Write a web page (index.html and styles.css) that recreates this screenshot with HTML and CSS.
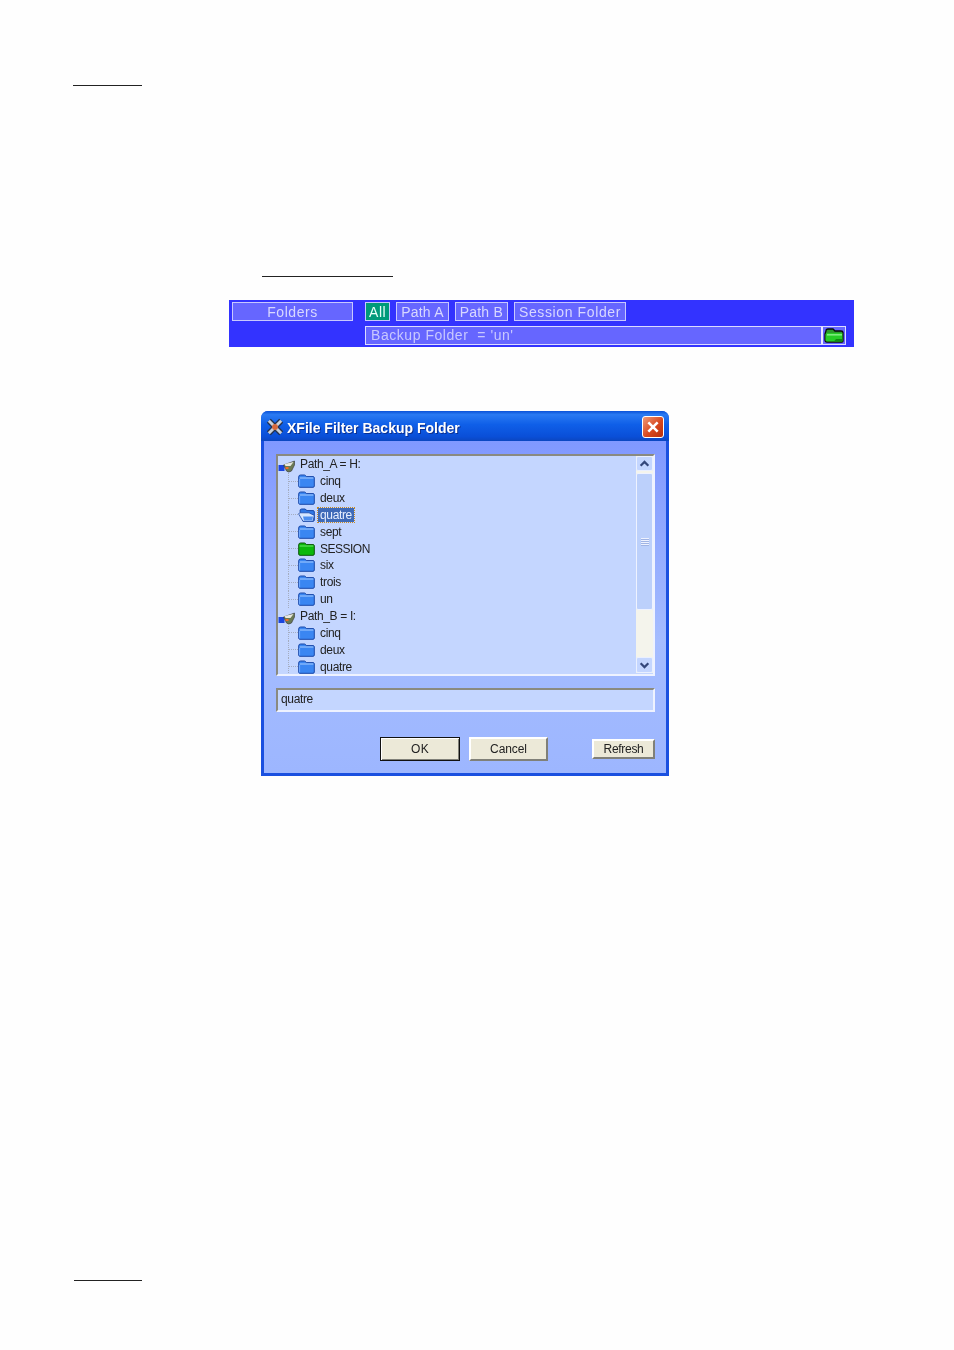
FILE: index.html
```html
<!DOCTYPE html>
<html lang="en">
<head>
<meta charset="utf-8">
<title>XFile Filter Backup Folder</title>
<link rel="stylesheet" href="styles.css">
</head>
<body>
<svg width="0" height="0" class="defs">
  <defs>
    <symbol id="folder" viewBox="0 0 17 14">
      <path d="M.7 3 Q.7 1 2.5 1 H6.5 Q7.5 1 8.3 2.6 H15 Q16.3 2.6 16.3 4 V12 Q16.3 13.3 15 13.3 H2 Q.7 13.3 .7 12 Z" fill="#3a86f2" stroke="#1a48a8" stroke-width="1"/>
      <path d="M1.6 4 H15.4" stroke="#a6ccff" stroke-width="1"/>
      <path d="M1.6 5 V12.4" stroke="#74aeff" stroke-width="1"/>
    </symbol>
    <symbol id="folder-open" viewBox="0 0 17 14">
      <path d="M2 3 Q2 1 3.5 1 H7 L9 2.6 H15 Q16.3 2.6 16.3 4 V12 Q16.3 13.3 15 13.3 H5 Z" fill="#2f78e6" stroke="#1a48a8" stroke-width="1"/>
      <path d="M.7 6 Q.7 4.8 2 4.8 H11 L16.3 7.4 L15 13.3 H5 Z" fill="#d6e6ff" stroke="#1a48a8" stroke-width=".8"/>
      <path d="M5 8.4 H15 L14.2 12.6 H6 Z" fill="#4c8ef0"/>
    </symbol>
    <symbol id="folder-green" viewBox="0 0 17 14">
      <path d="M.7 3 Q.7 1 2.5 1 H6.5 Q7.5 1 8.3 2.6 H15 Q16.3 2.6 16.3 4 V12 Q16.3 13.3 15 13.3 H2 Q.7 13.3 .7 12 Z" fill="#0cb80c" stroke="#0c540c" stroke-width="1"/>
      <path d="M1.6 4 H15.4" stroke="#6fe86f" stroke-width="1"/>
    </symbol>
    <symbol id="folder-bar" viewBox="0 0 20 15">
      <path d="M2 3 Q2 1 4 1 H9 L11 3 H17 Q19 3 19 4.5 V13 Q19 14 18 14 H3 Q1 14 1 12 V6 Z" fill="#2a9a2a" stroke="#0a0a0a" stroke-width="1.3"/>
      <path d="M1.6 6.4 Q2 5 3.4 5 H18.4 V13.4 H3 Q1.6 13.4 1.6 12 Z" fill="#26cc26"/>
      <path d="M3 6 H18 V7.6 H3 Z" fill="#7cec7c"/>
      <path d="M12 11 H18.4 V13.4 H10 Z" fill="#108a10"/>
    </symbol>
    <symbol id="drive" viewBox="0 0 18 14">
      <rect x="0" y="6" width="6" height="6" fill="#1b45e0"/>
      <path d="M5 6 L16 2 L16 6 L13 12 Q10 14 8 12 Z" fill="#6b7a55" stroke="#333" stroke-width=".6"/>
      <path d="M6 5 L15 3 L12 7 H7 Z" fill="#e8e8e0"/>
      <rect x="7" y="8" width="3" height="2" fill="#f07028"/>
    </symbol>
  </defs>
</svg>

<div class="rule rule-top"></div>
<div class="rule rule-section"></div>

<section class="bar">
  <div class="bar-title">Folders</div>
  <div class="bar-rows">
    <div class="bar-tabs">
      <span class="tab tab-active">All</span>
      <span class="tab tab-path">Path A</span>
      <span class="tab tab-path">Path B</span>
      <span class="tab tab-session">Session Folder</span>
    </div>
    <div class="bar-field">
      <span class="bar-value">Backup Folder&nbsp; = 'un'</span>
      <span class="bar-btn"><svg class="bar-icon"><use href="#folder-bar"/></svg></span>
    </div>
  </div>
</section>

<section class="dialog">
  <header class="titlebar">
    <svg class="app-icon" viewBox="0 0 16 16">
      <path d="M2.5 2.5 L13.5 13.5 M13.5 2.5 L2.5 13.5" stroke="#26324e" stroke-width="5"/>
      <path d="M2.5 2.5 L13.5 13.5 M13.5 2.5 L2.5 13.5" stroke="#c8d0dc" stroke-width="2.6"/>
      <circle cx="8" cy="8" r="2.6" fill="#d8683a"/>
    </svg>
    <span class="title">XFile Filter Backup Folder</span>
    <span class="close"><svg viewBox="0 0 12 12" class="close-x"><path d="M2 2 L10 10 M10 2 L2 10" stroke="#fff" stroke-width="2.2"/></svg></span>
  </header>
  <div class="client">
    <div class="treebox">
      <ul class="tree">
        <li class="node root"><svg class="drive"><use href="#drive"/></svg><span>Path_A = H:</span></li>
        <li class="node"><svg class="folder"><use href="#folder"/></svg><span>cinq</span></li>
        <li class="node"><svg class="folder"><use href="#folder"/></svg><span>deux</span></li>
        <li class="node"><svg class="folder"><use href="#folder-open"/></svg><span class="selected">quatre</span></li>
        <li class="node"><svg class="folder"><use href="#folder"/></svg><span>sept</span></li>
        <li class="node"><svg class="folder"><use href="#folder-green"/></svg><span class="caps">SESSION</span></li>
        <li class="node"><svg class="folder"><use href="#folder"/></svg><span>six</span></li>
        <li class="node"><svg class="folder"><use href="#folder"/></svg><span>trois</span></li>
        <li class="node"><svg class="folder"><use href="#folder"/></svg><span>un</span></li>
        <li class="node root"><svg class="drive"><use href="#drive"/></svg><span>Path_B = I:</span></li>
        <li class="node"><svg class="folder"><use href="#folder"/></svg><span>cinq</span></li>
        <li class="node"><svg class="folder"><use href="#folder"/></svg><span>deux</span></li>
        <li class="node"><svg class="folder"><use href="#folder"/></svg><span>quatre</span></li>
      </ul>
      <div class="scrollbar">
        <span class="sb-btn"><svg viewBox="0 0 10 8" class="chev"><path d="M1.5 6 L5 2.5 L8.5 6" fill="none" stroke="#34477a" stroke-width="2"/></svg></span>
        <span class="sb-thumb"><i class="grip"></i></span>
        <span class="sb-track"></span>
        <span class="sb-btn sb-down"><svg viewBox="0 0 10 8" class="chev"><path d="M1.5 2 L5 5.5 L8.5 2" fill="none" stroke="#34477a" stroke-width="2"/></svg></span>
      </div>
    </div>
    <div class="input">quatre</div>
    <div class="actions">
      <button class="btn btn-default">OK</button>
      <button class="btn btn-cancel">Cancel</button>
      <button class="btn btn-small">Refresh</button>
    </div>
  </div>
</section>

<div class="rule rule-bottom"></div>
</body>
</html>
```
FILE: styles.css
```css
* { box-sizing: border-box; }
html, body { margin: 0; padding: 0; }
body {
  width: 954px;
  height: 1350px;
  overflow: hidden;
  background: #fefefe;
  font-family: "Liberation Sans", Arial, sans-serif;
  color: #222;
}
.defs { position: absolute; }

.rule { height: 1px; background: #222; }
.rule-top { width: 69px; margin: 85px 0 0 73px; }
.rule-section { width: 131px; margin: 190px 0 0 262px; }
.rule-bottom { width: 68px; margin: 504px 0 0 74px; }

.bar {
  width: 625px;
  height: 47px;
  margin: 23px 0 0 229px;
  padding: 2px 8px 0 3px;
  background: #3333ff;
  display: flex;
  gap: 12px;
  color: #d8d8ff;
  font-size: 14px;
  letter-spacing: .55px;
  filter: blur(.25px);
}
.bar-title {
  width: 121px;
  height: 19px;
  line-height: 18px;
  text-align: center;
  background: #6666ff;
  border: 1px solid #c8c8ff;
}
.bar-rows { flex: 1; display: flex; flex-direction: column; gap: 5px; }
.bar-tabs { display: flex; gap: 6px; }
.tab {
  height: 19px;
  line-height: 18px;
  padding: 0 4px;
  background: #6666ff;
  border: 1px solid #c8c8ff;
}
.tab-active { background: #009a7a; color: #e8fff8; padding: 0 3px; }
.tab-path { letter-spacing: .2px; }
.tab-session { letter-spacing: .62px; }
.bar-field {
  height: 19px;
  display: flex;
  background: #6666ff;
  border: 1px solid #dcdcff;
}
.bar-value { flex: 1; line-height: 16px; padding-left: 5px; color: #c8c8ff; }
.bar-btn {
  width: 24px;
  border-left: 2px solid #e8e8ff;
  background: #6666ff;
  display: flex;
  align-items: center;
  justify-content: center;
}
.bar-icon { width: 20px; height: 15px; }

.dialog {
  width: 408px;
  height: 365px;
  margin: 64px 0 0 261px;
  background: #1a50e0;
  border-radius: 7px 7px 0 0;
  padding: 0 3px 3px;
  display: flex;
  flex-direction: column;
  filter: blur(.25px);
}
.titlebar {
  height: 30px;
  margin: 0 -3px;
  padding: 2px 5px 0 5px;
  display: flex;
  align-items: center;
  gap: 3px;
  border-radius: 7px 7px 0 0;
  background: linear-gradient(#0a52d8 0, #2a7af2 12%, #0f5fe8 45%, #0a4fd8 85%, #0b46c0 100%);
}
.app-icon { width: 18px; height: 18px; }
.title {
  flex: 1;
  padding-top: 2px;
  color: #fff;
  font-size: 14px;
  font-weight: bold;
  text-shadow: 1px 1px 0 #0a2f90;
}
.close {
  width: 22px;
  height: 22px;
  border: 1px solid #fff;
  border-radius: 3px;
  background: linear-gradient(135deg, #ef9a78, #d8481f 55%, #b8300c);
  display: flex;
  align-items: center;
  justify-content: center;
}
.close-x { width: 14px; height: 14px; }

.client {
  flex: 1;
  padding: 13px 11px 0 12px;
  background: linear-gradient(#8098ff, #a4bcff 60%, #9db6ff);
  font-size: 12px;
  letter-spacing: -.35px;
}
.treebox {
  height: 222px;
  display: flex;
  background: #c4d6ff;
  border: 2px solid;
  border-color: #8a8a80 #eef2ff #eef2ff #8a8a80;
  overflow: hidden;
}
.tree {
  flex: 1;
  list-style: none;
  margin: 0;
  padding: 0;
}
.node {
  height: 16.85px;
  display: flex;
  align-items: center;
  padding-left: 10px;
  white-space: nowrap;
}
.node::before {
  content: "";
  width: 9px;
  align-self: stretch;
  border-left: 1px dotted #a4acc0;
  background: repeating-linear-gradient(90deg, #a4acc0 0 1px, transparent 1px 2px) center / 100% 1px no-repeat;
}
.node.root { padding-left: 0; gap: 3px; }
.node.root::before { display: none; }
.folder { width: 17px; height: 14px; flex: none; margin-right: 5px; }
.drive { width: 19px; height: 14px; margin-top: 4px; }
.node.root span { margin-top: -1px; }
.caps { letter-spacing: -.5px; }
.selected {
  margin-left: -2px;
  padding: 0 2px;
  background: #3e6ab8;
  color: #e8f0ff;
  outline: 1px dotted #c88a20;
}
.scrollbar {
  width: 17px;
  margin-bottom: 1px;
  display: flex;
  flex-direction: column;
  background: #f4f4ec;
  gap: 2px;
}
.sb-btn {
  height: 15px;
  background: #c4d6ff;
  border: 1px solid #eaf0ff;
  border-radius: 2px;
  display: flex;
  align-items: center;
  justify-content: center;
}
.sb-down { height: 16px; }
.chev { width: 11px; height: 9px; }
.sb-thumb {
  height: 137px;
  background: #bcd0fb;
  border: 1px solid #eef2ff;
  border-radius: 2px;
  display: flex;
  align-items: center;
  justify-content: center;
}
.grip {
  width: 8px;
  height: 8px;
  background: repeating-linear-gradient(#eef2ff 0 1px, #a0b4e4 1px 2px);
}
.sb-track { flex: 1; }

.input {
  height: 24px;
  margin-top: 12px;
  padding-left: 3px;
  line-height: 18px;
  background: #c4d6ff;
  border: 2px solid;
  border-color: #8a8a80 #eef2ff #eef2ff #8a8a80;
}
.actions {
  display: flex;
  align-items: center;
  margin-top: 25px;
  padding-left: 104px;
}
.btn {
  font: 12px "Liberation Sans", Arial, sans-serif;
  color: #222;
  background: #ece9d8;
  padding: 0;
  border: 2px solid;
  border-color: #fff #808078 #808078 #fff;
}
.btn-default {
  width: 80px;
  height: 24px;
  border: 1px solid #111;
  box-shadow: inset 1px 1px 0 #fff, inset -1px -1px 0 #808078;
  letter-spacing: .3px;
}
.btn-cancel { width: 79px; height: 24px; margin-left: 9px; letter-spacing: -.1px; }
.btn-small { width: 63px; height: 20px; margin-left: 44px; letter-spacing: -.3px; }
```
